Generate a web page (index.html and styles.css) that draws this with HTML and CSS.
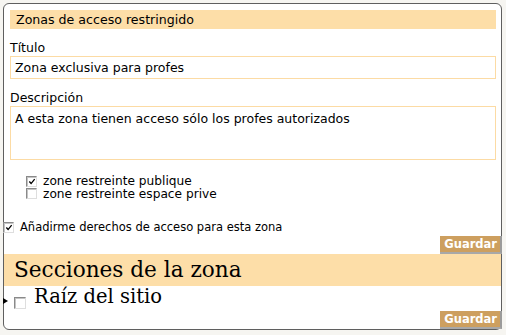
FILE: index.html
```html
<!DOCTYPE html>
<html lang="es">
<head>
<meta charset="utf-8">
<title>Zonas de acceso restringido</title>
<link rel="stylesheet" href="styles.css">
</head>
<body>
<div class="box">
  <div class="form">
    <div class="title">Zonas de acceso restringido</div>
    <label class="lbl">Título</label>
    <div class="field">Zona exclusiva para profes</div>
    <label class="lbl">Descripción</label>
    <div class="area">A esta zona tienen acceso sólo los profes autorizados</div>
    <ul class="opts">
      <li class="opt"><span class="cb"><svg class="tick" viewBox="0 0 9 9" width="9" height="9"><path d="M1.5 4.5 L3.5 6.8 L7.5 1.8" fill="none" stroke="#000" stroke-width="1.5"/></svg></span>zone restreinte publique</li>
      <li class="opt"><span class="cb"></span>zone restreinte espace prive</li>
    </ul>
  </div>
  <div class="self"><span class="cb"><svg class="tick" viewBox="0 0 9 9" width="9" height="9"><path d="M1.5 4.5 L3.5 6.8 L7.5 1.8" fill="none" stroke="#000" stroke-width="1.5"/></svg></span>Añadirme derechos de acceso para esta zona</div>
  <div class="actions"><span class="btn">Guardar</span></div>
  <h3 class="sec">Secciones de la zona</h3>
  <div class="tree"><span class="arrow"></span><span class="cb big"></span><span class="root">Raíz del sitio</span></div>
  <div class="actions"><span class="btn">Guardar</span></div>
</div>
</body>
</html>
```
FILE: styles.css
```css
html, body {
  margin: 0;
  background: #f6f5f1;
}
body {
  font-family: "DejaVu Sans", sans-serif;
  color: #000;
}
.box {
  margin: 3px 0 0 3px;
  width: 499px;
  box-sizing: border-box;
  border: 1px solid #5f5f5f;
  border-radius: 6px;
  background: #fff;
}
.form {
  padding: 6px 5px 0 6px;
}
.title {
  background: #fddea8;
  height: 19px;
  line-height: 19px;
  padding-left: 6px;
  font-size: 12.6px;
}
.lbl {
  display: block;
  margin-top: 11px;
  line-height: 16px;
  font-size: 12.5px;
}
.field {
  border: 1px solid #fcdba4;
  height: 21px;
  line-height: 21px;
  padding-left: 4px;
  font-size: 12.5px;
}
.area {
  border: 1px solid #fcdba4;
  height: 44px;
  padding: 4px 4px;
  line-height: 15px;
  font-size: 12.5px;
}
.opts {
  list-style: none;
  margin: 15px 0 0 16px;
  padding: 0;
}
.opt {
  display: flex;
  align-items: center;
  gap: 6px;
  height: 12.5px;
  line-height: 12px;
  font-size: 12.2px;
}
.cb {
  display: inline-flex;
  align-items: center;
  justify-content: center;
  flex: none;
  width: 11px;
  height: 11px;
  box-sizing: border-box;
  border: 1px solid;
  border-color: #8a8a8a #dedede #dedede #8a8a8a;
  box-shadow: inset 1px 1px 0 #c4c4c4;
  background: #fff;
}
.tick {
  display: block;
  margin: 1px 0 0 1px;
}
.self {
  display: flex;
  align-items: center;
  gap: 6px;
  height: 12px;
  line-height: 12px;
  margin: 21px 0 0 -1px;
  font-size: 11.5px;
}
.actions {
  display: flex;
  justify-content: flex-end;
  margin-right: -1px;
}
.self + .actions {
  margin-top: 3px;
}
.btn {
  background: #cd9f5f;
  color: #fff;
  font-weight: bold;
  font-size: 11.5px;
  line-height: 16px;
  padding: 0 3px 0 4px;
  border-right: 2px solid #9b9b9b;
  border-bottom: 2px solid #a8a8a8;
}
.sec {
  margin: 0;
  background: #fddea8;
  height: 32px;
  line-height: 32px;
  padding-left: 10px;
  font-family: "DejaVu Serif", serif;
  font-weight: normal;
  font-size: 21.6px;
}
.tree {
  display: flex;
  align-items: flex-start;
  height: 25px;
}
.arrow {
  flex: none;
  width: 0;
  height: 0;
  margin: 12px 0 0 -1px;
  border-left: 5px solid #000;
  border-top: 3px solid transparent;
  border-bottom: 3px solid transparent;
}
.cb.big {
  width: 12px;
  height: 12px;
  margin: 11px 0 0 6px;
}
.root {
  margin-left: 8px;
  font-family: "DejaVu Serif", serif;
  font-size: 19.5px;
  line-height: 22px;
}
```
